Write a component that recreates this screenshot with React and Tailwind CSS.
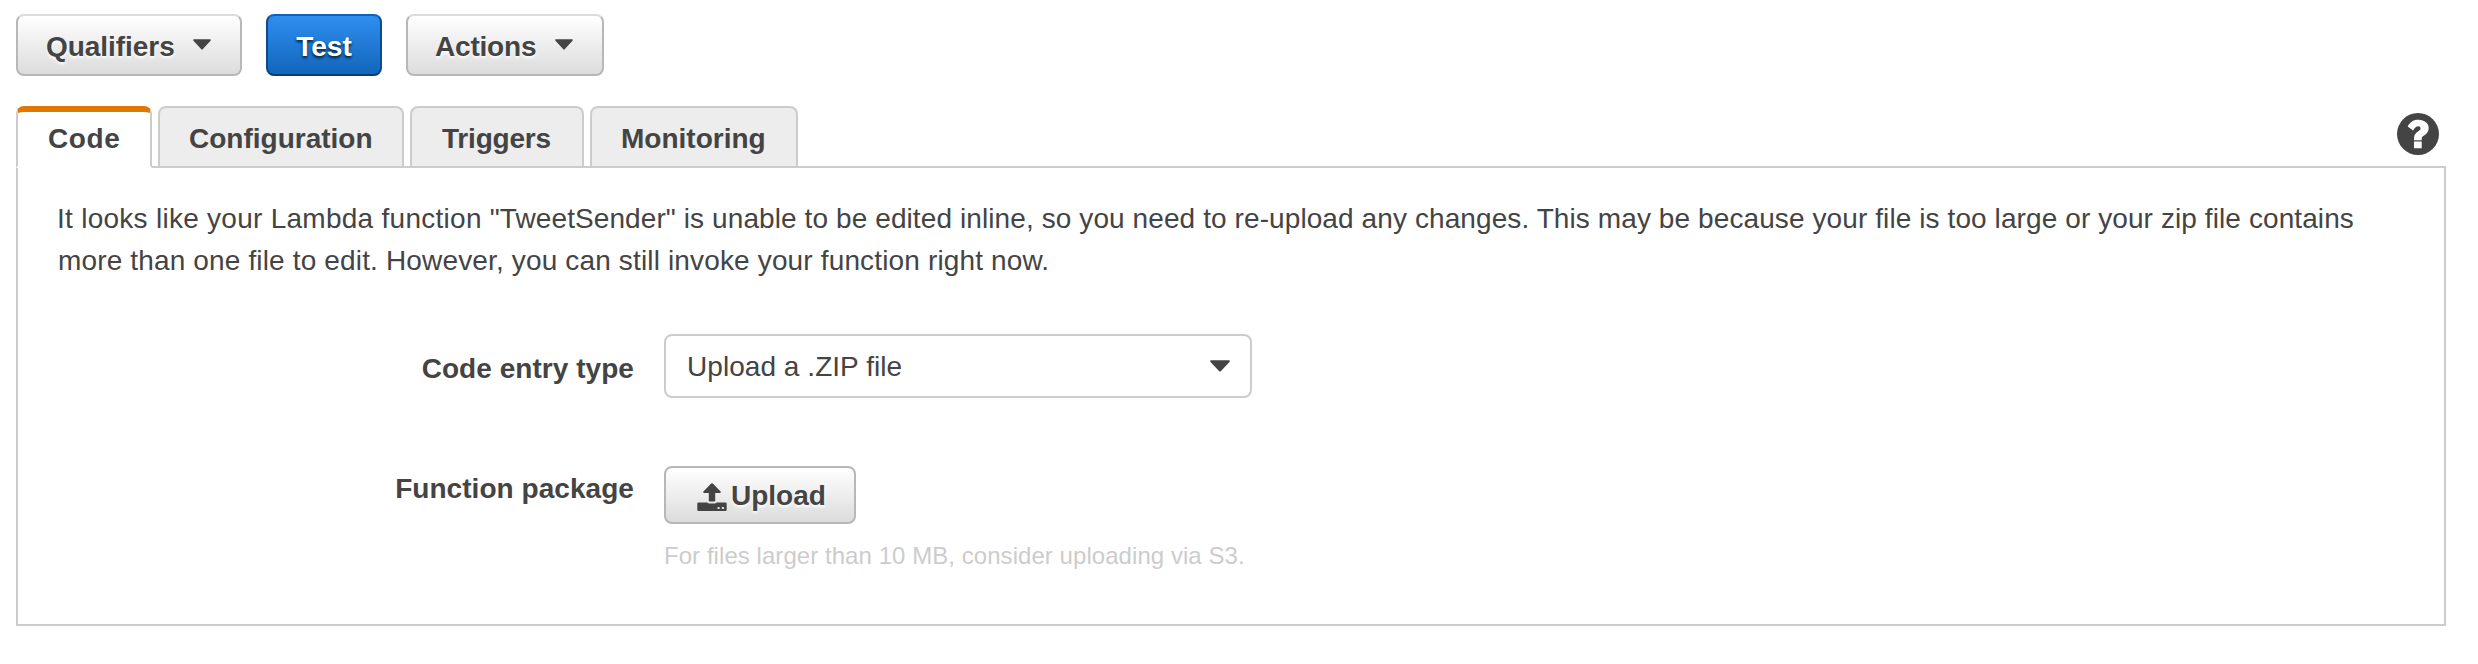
function Caret({ className }) {
  return (
    <svg viewBox="0 0 20 12" preserveAspectRatio="none" className={className} fill="#444">
      <path d="M1 0.3H19Q20.3 0.5 19.5 1.9L11 11Q10 12.2 9 11L0.5 1.9Q-0.3 0.5 1 0.3Z" />
    </svg>
  );
}

function MenuButton({ label, className }) {
  return (
    <button
      className={`flex h-[62px] items-center justify-between rounded-[8px] border-2 border-[#b7b7b7] border-t-[#dcdcdc] bg-linear-to-b from-white to-[#dcdcdc] pr-[29px] font-bold ${className}`}
    >
      <span className="pt-[3px] [text-shadow:0_2px_3px_#fff]">{label}</span>
      <Caret className="-mt-px h-[11px] w-[18px]" />
    </button>
  );
}

function Tab({ label, className }) {
  return (
    <div
      className={`h-[60px] rounded-t-[8px] border-2 border-b-0 border-[#ccc] bg-[#ededed] pt-[10px] font-bold ${className}`}
    >
      {label}
    </div>
  );
}

function HelpIcon() {
  return (
    <svg viewBox="0 0 42 42" className="mt-[7px] mr-[7px] ml-auto size-[42px]">
      <circle cx="21" cy="21" r="21" fill="#444" />
      <path
        fill="#fff"
        d="M10.7 13.4C13.2 8.6 17 6.7 21.5 6.7C27.5 6.7 31.7 10.3 31.7 15C31.7 18.8 29.6 21 27 22.6C25.3 23.7 24.7 24.4 24.7 26V27.2H17V25.2C17 21.7 19 19.8 21.3 18.3C22.8 17.3 23.6 16.6 23.6 15.3C23.6 14 22.6 13.2 21.2 13.2C19.3 13.2 18 14.4 16.1 17.4ZM17 28.4H24.7V35.2H17Z"
      />
    </svg>
  );
}

function UploadIcon() {
  return (
    <svg viewBox="0 0 30 29" className="mt-[5px] h-[29px] w-[30px]" fill="#444">
      <path d="M14.2 0.6Q15 -0.1 15.8 0.6L23.6 8.6Q24.2 9.8 23 9.9H18.2V17.6Q18.2 18.6 17.2 18.6H12.8Q11.8 18.6 11.8 17.6V9.9H7Q5.8 9.8 6.4 8.6Z" />
      <path
        fillRule="evenodd"
        d="M1.6 19.5H10.5Q11 20.6 12.2 20.6H17.8Q19 20.6 19.5 19.5H28.4Q29.7 19.5 29.7 20.8V26.7Q29.7 28 28.4 28H1.6Q0.3 28 0.3 26.7V20.8Q0.3 19.5 1.6 19.5ZM20.6 24V26H22.6V24ZM24.9 24V26H26.9V24Z"
      />
    </svg>
  );
}

export default function App() {
  return (
    <main className="h-[664px] w-[2478px] bg-white pt-[14px] pl-4 font-['Liberation_Sans',Arial,sans-serif] text-[28px] leading-[42px] text-[#444]">
      <div className="flex">
        <MenuButton label="Qualifiers" className="w-[226px] pl-[28px] tracking-[-0.05px]" />
        <button className="ml-6 h-[62px] w-[116px] rounded-[8px] border-2 border-[#0c4a8a] border-t-[#1063b8] border-b-[#093d73] bg-linear-to-b from-[#2f8ef0] to-[#1166bb] pt-[3px] font-bold text-white [text-shadow:0_2px_3px_rgba(0,0,0,0.8)]">
          Test
        </button>
        <MenuButton label="Actions" className="ml-6 w-[198px] pl-[27px] tracking-[-0.2px]" />
      </div>

      <div className="mt-[30px] flex h-[60px] w-[2430px] gap-[6px]">
        <div className="relative h-[62px] w-[136px] rounded-t-[8px] border-2 border-t-[6px] border-[#ccc] border-t-[#e07700] border-b-white bg-white pt-[6px] pl-[30px] font-bold tracking-[0.6px]">
          Code
        </div>
        <Tab label="Configuration" className="w-[246px] pl-[29px]" />
        <Tab label="Triggers" className="w-[174px] pl-[30px] tracking-[-0.2px]" />
        <Tab label="Monitoring" className="w-[208px] pl-[29px]" />
        <HelpIcon />
      </div>

      <section className="h-[460px] w-[2430px] border-2 border-[#ccc] pt-[30px]">
        <p className="ml-[39px] w-[2330px] tracking-[0.095px]">
          <span className="tracking-[0.27px]">It looks like your Lambda function </span>
          "TweetSender" is unable to be edited inline, so you need to re-upload any changes. This may be
          because your file is too large or your zip file contains
          <br />
          <span className="ml-px tracking-[0.15px]">
            more than one file to edit. However, you can still invoke your function right now.
          </span>
        </p>

        <div className="mt-[52px] grid grid-cols-[616px_588px] gap-x-[30px]">
          <div className="pt-[14px] text-right font-bold tracking-[0.05px]">Code entry type</div>
          <div className="flex h-16 items-center justify-between rounded-[8px] border-2 border-[#ccc] bg-white pr-[20px] pl-[20px]">
            <span className="pt-[2px] pl-px tracking-[0.05px]">Upload a .ZIP file</span>
            <Caret className="h-[12px] w-[20px]" />
          </div>

          <div className="mt-[68px] pt-[2px] text-right font-bold tracking-[0.05px]">Function package</div>
          <div className="mt-[68px]">
            <button className="flex h-[58px] w-[192px] items-center rounded-[8px] border-2 border-[#b7b7b7] bg-linear-to-b from-white to-[#dcdcdc] pl-[31px] font-bold">
              <UploadIcon />
              <span className="ml-[4px] pt-[2px] [text-shadow:0_2px_3px_#fff]">Upload</span>
            </button>
            <p className="mt-[14px] text-[24px] leading-[36px] tracking-[0.055px] text-[#ccc]">
              For files larger than 10 MB, consider uploading via S3.
            </p>
          </div>
        </div>
      </section>
    </main>
  );
}
